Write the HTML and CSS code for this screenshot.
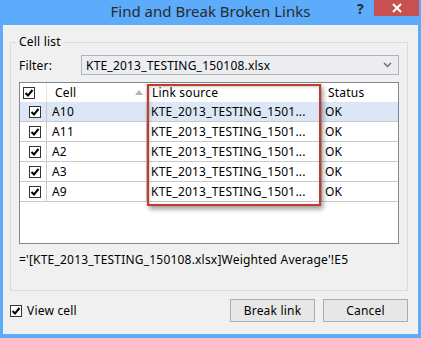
FILE: index.html
```html
<!DOCTYPE html>
<html lang="en">
<head>
  <meta charset="UTF-8">
  <title>Find and Break Broken Links</title>
  <link rel="stylesheet" href="styles.css">
</head>
<body>
  <div class="window">
    <div class="titlebar">
      <span class="title">Find and Break Broken Links</span>
      <span class="help">?</span>
      <span class="close">
        <svg width="10" height="10" viewBox="0 0 10 10"><path d="M1 1 L9 9 M9 1 L1 9" stroke="#fff" stroke-width="2"/></svg>
      </span>
    </div>

    <div class="client">
      <div class="group">
        <span class="legend">Cell list</span>

        <div class="filter-row">
          <label>Filter:</label>
          <div class="combo">
            <span>KTE_2013_TESTING_150108.xlsx</span>
            <svg width="9" height="6" viewBox="0 0 9 6"><path d="M1 1 L4.5 4.5 L8 1" stroke="#6d6d6d" stroke-width="1.5" fill="none"/></svg>
          </div>
        </div>

        <div class="list">
          <div class="row head">
            <div class="c chk"><i class="box on"></i></div>
            <div class="c cell">Cell <span class="sort"></span></div>
            <div class="c src">Link source</div>
            <div class="c status">Status</div>
          </div>
          <div class="row selected">
            <div class="c chk"><i class="box on"></i></div>
            <div class="c cell">A10</div>
            <div class="c src">KTE_2013_TESTING_1501...</div>
            <div class="c status">OK</div>
          </div>
          <div class="row">
            <div class="c chk"><i class="box on"></i></div>
            <div class="c cell">A11</div>
            <div class="c src">KTE_2013_TESTING_1501...</div>
            <div class="c status">OK</div>
          </div>
          <div class="row">
            <div class="c chk"><i class="box on"></i></div>
            <div class="c cell">A2</div>
            <div class="c src">KTE_2013_TESTING_1501...</div>
            <div class="c status">OK</div>
          </div>
          <div class="row">
            <div class="c chk"><i class="box on"></i></div>
            <div class="c cell">A3</div>
            <div class="c src">KTE_2013_TESTING_1501...</div>
            <div class="c status">OK</div>
          </div>
          <div class="row">
            <div class="c chk"><i class="box on"></i></div>
            <div class="c cell">A9</div>
            <div class="c src">KTE_2013_TESTING_1501...</div>
            <div class="c status">OK</div>
          </div>
          <div class="highlight"></div>
        </div>

        <div class="formula">='[KTE_2013_TESTING_150108.xlsx]Weighted Average'!E5</div>
      </div>

      <div class="bottom">
        <label class="view"><i class="box on"></i>View cell</label>
        <div class="buttons">
          <button>Break link</button>
          <button>Cancel</button>
        </div>
      </div>
    </div>
  </div>
</body>
</html>
```

FILE: styles.css
```css
* {
  box-sizing: border-box;
}
body {
  margin: 0;
  font-family: 'Noto Sans', 'Open Sans', sans-serif;
  font-size: 12px;
  letter-spacing: 0.2px;
  color: #000;
}
.window {
  width: 421px;
  height: 338px;
  background: #5cacfb;
  display: flex;
  flex-direction: column;
}
.titlebar {
  height: 25px;
  position: relative;
  display: flex;
  justify-content: center;
}
.title {
  font-size: 15px;
  line-height: 22px;
  letter-spacing: 0;
  color: #2a2a2a;
}
.help {
  position: absolute;
  left: 357px;
  top: -1px;
  font-size: 14px;
  font-weight: bold;
  color: #2a2a2a;
}
.close {
  position: absolute;
  right: 2px;
  top: 0;
  width: 45px;
  height: 16px;
  background: #c75050;
  display: flex;
  align-items: center;
  justify-content: center;
}
.client {
  margin: 0 3px 4px 3px;
  height: 309px;
  background: #f0f0f0;
  display: flex;
  flex-direction: column;
}

/* group box */
.group {
  position: relative;
  margin: 17px 10px 0 7px;
  border: 1px solid #dcdcdc;
  padding: 12px 8px 22px 8px;
}
.legend {
  position: absolute;
  top: -10px;
  left: 5px;
  padding: 0 3px;
  background: #f0f0f0;
  line-height: 18px;
}
.filter-row {
  display: flex;
  align-items: center;
  height: 20px;
}
.filter-row label {
  width: 62px;
}
.combo {
  flex: 1;
  height: 20px;
  border: 1px solid #acb4bf;
  background: #ebedf0;
  display: flex;
  align-items: center;
  justify-content: space-between;
  padding: 0 6px 0 4px;
}

/* list view */
.list {
  position: relative;
  margin-top: 7px;
  height: 162px;
  border: 1px solid #828790;
  background: #fff;
}
.row {
  display: grid;
  grid-template-columns: 27px 100px 175px 1fr;
  height: 20px;
  border-bottom: 1px solid #c9c9c9;
}
.row .c {
  display: flex;
  align-items: center;
  border-right: 1px solid #c9c9c9;
  white-space: nowrap;
  overflow: hidden;
}
.row .c:last-child {
  border-right: none;
}
.row.head {
  height: 19px;
  border-bottom: none;
}
.row.head .c {
  border-right-color: #e5e5e5;
}
.row.selected {
  background: #dce7f6;
}
.chk {
  padding-left: 9px;
}
.head .chk {
  padding-left: 3px;
}
.cell {
  padding-left: 5px;
}
.head .cell {
  padding-left: 8px;
  position: relative;
}
.src {
  padding-left: 4px;
}
.head .src {
  padding-left: 5px;
}
.status {
  padding-left: 3px;
}
.head .status {
  padding-left: 6px;
}
.sort {
  position: absolute;
  right: 3px;
  top: 7px;
  border-left: 4px solid transparent;
  border-right: 4px solid transparent;
  border-bottom: 5px solid #b3b3b3;
}
.highlight {
  position: absolute;
  left: 127px;
  top: 1px;
  width: 174px;
  height: 122px;
  border: 2px solid #c23c2b;
  box-shadow: 2px 3px 5px rgba(0, 0, 0, 0.4), inset 1px 1px 3px rgba(0, 0, 0, 0.2);
}

.box {
  display: inline-block;
  width: 12px;
  height: 12px;
  border: 1px solid #333;
  background: #fff url("data:image/svg+xml,%3Csvg xmlns='http://www.w3.org/2000/svg' width='10' height='10' viewBox='0 0 10 10'%3E%3Cpath d='M1.5 5 L4 7.5 L8.5 2' stroke='%23000' stroke-width='2' fill='none'/%3E%3C/svg%3E") center no-repeat;
}

.formula {
  margin-top: 8px;
  line-height: 16px;
}

.bottom {
  display: flex;
  align-items: center;
  justify-content: space-between;
  margin-top: 8px;
  padding: 0 10px 0 7px;
}
.view {
  display: flex;
  align-items: center;
  gap: 5px;
}
.buttons {
  display: flex;
  gap: 8px;
}
button {
  width: 85px;
  height: 23px;
  font-family: inherit;
  font-size: 12px;
  letter-spacing: 0.2px;
  color: #000;
  background: #e7e7e7;
  border: 1px solid #acacac;
  padding: 0;
}
```
